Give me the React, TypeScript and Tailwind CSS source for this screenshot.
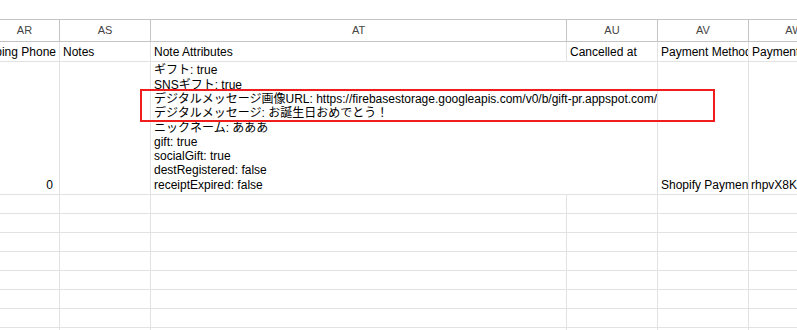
import React from "react";

const gridCols = "grid grid-cols-[60px_91px_416px_91px_91px_91px]";

const letters = ["AR", "AS", "AT", "AU", "AV", "AW"];

const noteLines = [
  "ギフト: true",
  "SNSギフト: true",
  "デジタルメッセージ画像URL: https://firebasestorage.googleapis.com/v0/b/gift-pr.appspot.com/o/messages%2Fimage.png",
  "デジタルメッセージ: お誕生日おめでとう！",
  "ニックネーム: あああ",
  "gift: true",
  "socialGift: true",
  "destRegistered: false",
  "receiptExpired: false",
];

const Cell = ({ className = "", children }: { className?: string; children?: React.ReactNode }) => (
  <div className={`overflow-hidden whitespace-nowrap border-r border-b border-[#e2e2e2] ${className}`}>
    {children}
  </div>
);

const App = () => {
  return (
    <div className="relative h-[330px] w-[797px] overflow-hidden bg-white font-['Liberation_Sans','Noto_Sans_CJK_JP',sans-serif] text-[12px] text-black">
      <div className="h-[19px]" />
      <div className="w-[840px] border-t border-[#c4c4c4]">
        {/* column letters */}
        <div className={`${gridCols} h-[22px]`}>
          {letters.map((l, i) => (
            <div
              key={l}
              className={`flex items-center justify-center border-r border-b border-[#c4c4c4] text-[11px] text-[#444] ${
                i === 0 ? "pr-[10px]" : ""
              }`}
            >
              {l}
            </div>
          ))}
        </div>

        {/* field names */}
        <div className={`${gridCols} h-[20px]`}>
          <Cell className="flex items-center justify-end pr-[3px]">Shipping Phone</Cell>
          <Cell className="flex items-center px-[3px]">Notes</Cell>
          <Cell className="flex items-center px-[3px]">Note Attributes</Cell>
          <Cell className="flex items-center px-[3px]">Cancelled at</Cell>
          <Cell className="flex items-center px-[3px]">Payment Method</Cell>
          <Cell className="flex items-center px-[3px]">Payment Reference</Cell>
        </div>

        {/* data row: the notes overflow into the empty Cancelled at cell */}
        <div className={`${gridCols} h-[133px]`}>
          <Cell className="flex items-end justify-end pr-[6px] pb-[2px] leading-[14.3px]">0</Cell>
          <Cell />
          <Cell className="col-span-2 flex flex-col justify-end px-[3px] pb-[2px] leading-[14.3px]">
            {noteLines.map((t) => (
              <div key={t}>{t}</div>
            ))}
          </Cell>
          <Cell className="flex items-end px-[3px] pb-[2px] leading-[14.3px]">Shopify Payments</Cell>
          <Cell className="flex items-end px-[2px] pb-[2px] leading-[14.3px]">rhpvX8KqLmZ2</Cell>
        </div>

        {/* empty rows */}
        {Array.from({ length: 8 }).map((_, r) => (
          <div key={r} className={`${gridCols} h-[19px]`}>
            {letters.map((l) => (
              <Cell key={l} />
            ))}
          </div>
        ))}
      </div>

      {/* highlight box */}
      <div className="absolute left-[140px] top-[89px] h-[33px] w-[575px] border-2 border-[#f01d1d]" />
    </div>
  );
};

export default App;
